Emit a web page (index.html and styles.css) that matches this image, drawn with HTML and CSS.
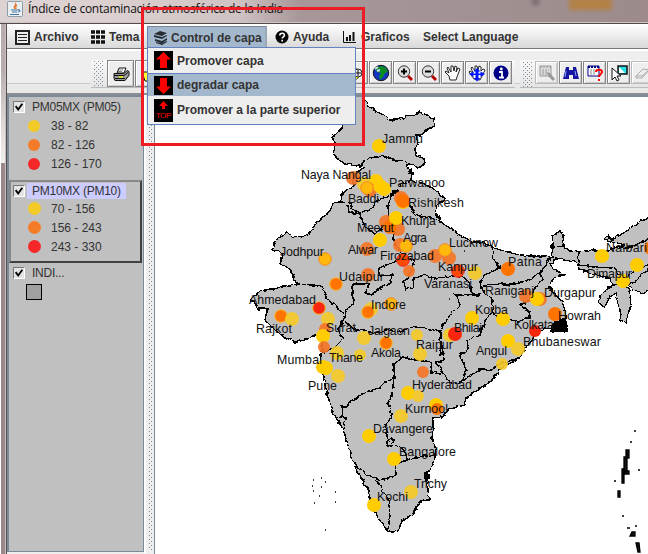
FILE: index.html
```
<!DOCTYPE html>
<html lang="es">
<head>
<meta charset="utf-8">
<title>Índice de contaminación atmosférica de la India</title>
<link rel="stylesheet" href="styles.css">
</head>
<body>
<div class="window">
  <header class="titlebar">
    <svg class="java" width="16" height="16" viewBox="0 0 16 16"><rect x=".5" y=".5" width="15" height="15" rx="1" fill="#e8eef2" stroke="#8b9eaa"/><path d="M8 2c3 2-3 3 0 6M10 4c-2 1-1 2-1 4" fill="none" stroke="#e8742c" stroke-width="1.2"/><path d="M4 9h7M5 11h5M3 13.5h9M11 9c3-1 2 2 0 2" fill="none" stroke="#47749a" stroke-width="1.1"/></svg>
    <span class="title">Índice de contaminación atmosférica de la India</span>
    <i class="blur-spot"></i><i class="blur-patch"></i>
  </header>
  <div class="frame">
    <nav class="menubar">
      <div class="menu archivo"><svg width="15" height="15" viewBox="0 0 15 15"><rect x="1" y="1" width="13" height="13" fill="#eee" stroke="#222" stroke-width="2"/><path d="M3 4.500h9M3 7.500h9M3 10.500h9" stroke="#222"/></svg><span>Archivo</span></div>
      <div class="menu tema"><svg width="14" height="14" viewBox="0 0 14 14"><path d="M0 2h4M5 2h4M10 2h4M0 7h4M5 7h4M10 7h4M0 12h4M5 12h4M10 12h4" stroke="#111" stroke-width="3.600"/></svg><span>Tema</span></div>
      <div class="menu capa"><svg width="16" height="14" viewBox="0 0 16 14"><path d="M1 3l6-3 7 2-5 3zM1 4l8 2 5-2v1l-5 3-8-2zM2 8l7 2 5-3v2l-5 3-7-2zM3 11l6 1 5-2v1l-5 3-6-2z" fill="#252c33"/></svg><span>Control de capa</span></div>
      <div class="menu ayuda"><svg width="14" height="14" viewBox="0 0 14 14"><circle cx="7" cy="7" r="6.500" fill="#050505"/><path d="M4.800 5.500c0-3 4.600-3 4.600-.3 0 1.700-2.200 1.500-2.200 3.200M7.200 9.800v1.700" stroke="#fff" stroke-width="1.600" fill="none"/></svg><span>Ayuda</span></div>
      <div class="menu graficos"><svg width="13" height="12" viewBox="0 0 13 12"><path d="M.5 0v11.500H13" stroke="#111" fill="none"/><path d="M4 10V6M7 10V4M10.500 10V1" stroke="#111" stroke-width="2"/></svg><span>Graficos</span></div>
      <div class="menu lang"><span>Select Language</span></div>
    </nav>
    <div class="toolbar">
      <div class="strip first">
        <i class="grip"></i>
        <b class="tool big"><svg width="18" height="18" viewBox="0 0 18 18"><path d="M5 8l2-5h7l-2 5z" fill="#fff" stroke="#111"/><path d="M7 5h4M6 6.500h4" stroke="#555" stroke-width=".7"/><path d="M2 8.500h10l3-3 2 1v4l-4 5H3l-1-2z" fill="#999" stroke="#111"/><path d="M2 10.500h10l4-3M3 13.500h10" stroke="#111" fill="none"/><path d="M7 12h4" stroke="#dce21f" stroke-width="2"/></svg></b>
        <b class="tool big"><svg width="20" height="18" viewBox="0 0 20 18"><path d="M3 7h9v9H6z" fill="#ff3" stroke="#111"/></svg></b>
      </div>
      <div class="strip second">
        <b class="tool"><svg width="18" height="18" viewBox="0 0 18 18"><path d="M4 3l5 2 5 4-5 6-5 1z" fill="#ff0" stroke="#555"/><circle cx="10" cy="9" r="4" fill="#eee" stroke="#222"/><path d="M7 9h6M10 6v6" stroke="#111"/></svg></b>
        <b class="tool"><svg width="18" height="18" viewBox="0 0 18 18"><circle cx="9" cy="9" r="7.700" fill="#1434c4" stroke="#111"/><path d="M5 3l5-1 4 2 2 4-3 1-2 4-3 3-1-4 2-3-4-1-2-3z" fill="#0a8c25"/><path d="M3 5l3-2M5 7l3-1" stroke="#cde" stroke-width="2"/></svg></b>
        <b class="tool"><svg width="18" height="18" viewBox="0 0 18 18"><path d="M12 12l4 4" stroke="#b80000" stroke-width="3"/><circle cx="8" cy="7.500" r="5.700" fill="#ddd" stroke="#333"/><path d="M5 7.500h6M8 4.500v6" stroke="#000" stroke-width="2"/></svg></b>
        <b class="tool"><svg width="18" height="18" viewBox="0 0 18 18"><path d="M12 12l4 4" stroke="#b80000" stroke-width="3"/><circle cx="8" cy="7.500" r="5.700" fill="#ddd" stroke="#333"/><path d="M5 7.500h6" stroke="#000" stroke-width="2"/></svg></b>
        <b class="tool"><svg width="18" height="18" viewBox="0 0 18 18"><path d="M6 16l-1-4-4-4 1-1 3 2-2-5 1-1 3 5V2h2l1 5 1-5 2 1-1 5 2-4 2 1-3 8-1 3z" fill="#fff" stroke="#111" stroke-width=".9"/></svg></b>
        <b class="tool"><svg width="18" height="18" viewBox="0 0 18 18"><path d="M6 15l-5-7 1-1 3 2-2-5 1-1 3 4V2h2l1 4 1-4 2 1v4l2-2 2 1-3 6-2 4z" fill="#fff" stroke="#111" stroke-width=".9"/><path d="M9 4l3.500 3.500h-2v2h2v-2L17 10l-4.500 3v-2h-2v3h2L9 17.500 5.500 14h2v-3h-2v2L1 10l4.500-2.500v2h2v-2h-2z" fill="#0014ff"/></svg></b>
        <b class="tool"><svg width="16" height="16" viewBox="0 0 16 16"><circle cx="8" cy="8" r="7.500" fill="#000087"/><path d="M6 7h3v5M6 12.500h5" stroke="#fff" stroke-width="1.800" fill="none"/><circle cx="8.300" cy="4" r="1.400" fill="#fff"/></svg></b>
      </div>
      <div class="strip third">
        <i class="grip"></i>
        <b class="tool off"><svg width="18" height="18" viewBox="0 0 18 18"><path d="M2 2h11v10H2z" fill="#ddd" stroke="#999"/><path d="M2 3h11M4 6h7M4 8h6M4 10h6" stroke="#999" stroke-dasharray="2 1"/><path d="M9 8l3 1 5 6-2 2-5-5z" fill="#999"/></svg></b>
        <b class="tool"><svg width="18" height="18" viewBox="0 0 18 18"><path d="M4 3h3v3h4V3h3l3 12h-6v-4H7v4H1z" fill="#1515a0"/><path d="M4 7L3 13M13 7l1 5" stroke="#87a6ff"/></svg></b>
        <b class="tool"><svg width="18" height="18" viewBox="0 0 18 18"><path d="M2 2h11v10H2z" fill="#fff" stroke="#00008b"/><path d="M2 3h11" stroke="#00008b" stroke-width="2" stroke-dasharray="2 1"/><path d="M4 6h7M4 8h6M4 10h6" stroke="#888" stroke-dasharray="2 1"/><path d="M10 8c0-3 6-3 6 0 0 2-3 2-3 5M13 15v2" fill="none" stroke="#f00" stroke-width="2"/></svg></b>
        <b class="tool"><svg width="18" height="18" viewBox="0 0 18 18"><path d="M8 2h9v8H8z" fill="#28dfe8" stroke="#111" stroke-width="1.500"/><path d="M9 3l6 6H9z" fill="#fff"/><path d="M2 4v12l3-3 2 4 2-1-2-4h4z" fill="#fff" stroke="#111"/></svg></b>
        <b class="tool off"><svg width="18" height="18" viewBox="0 0 18 18"><path d="M2 12l7-7 6 1-7 8H2z" fill="#eee" stroke="#aaa"/><path d="M2 12h6l7-6" fill="none" stroke="#aaa"/></svg></b>
      </div>
    </div>
    <main class="split">
      <aside class="legend">
        <section class="layer">
          <div class="head"><svg class="check" width="12" height="12" viewBox="0 0 12 12"><path d="M2 5l3 4 5-7" fill="none" stroke="#000" stroke-width="2.200"/></svg><span>PM05MX (PM05)</span></div>
          <div class="range"><i class="dot y"></i><span>38 - 82</span></div>
          <div class="range"><i class="dot o"></i><span>82 - 126</span></div>
          <div class="range"><i class="dot r"></i><span>126 - 170</span></div>
        </section>
        <section class="layer active">
          <div class="head"><svg class="check" width="12" height="12" viewBox="0 0 12 12"><path d="M2 5l3 4 5-7" fill="none" stroke="#000" stroke-width="2.200"/></svg><span>PM10MX (PM10)</span></div>
          <div class="range"><i class="dot y"></i><span>70 - 156</span></div>
          <div class="range"><i class="dot o"></i><span>156 - 243</span></div>
          <div class="range"><i class="dot r"></i><span>243 - 330</span></div>
        </section>
        <section class="layer base">
          <div class="head"><svg class="check" width="12" height="12" viewBox="0 0 12 12"><path d="M2 5l3 4 5-7" fill="none" stroke="#000" stroke-width="2.200"/></svg><span>INDI...</span></div>
          <i class="square"></i>
        </section>
      </aside>
      <div class="divider"><i></i></div>
      <div class="map">
        <svg width="493" height="457" viewBox="155 97 493 457">
          <defs><filter id="rough" filterUnits="userSpaceOnUse" x="155" y="90" width="520" height="470"><feTurbulence type="fractalNoise" baseFrequency=".18" numOctaves="2" seed="7"/><feDisplacementMap in="SourceGraphic" scale="4.500" xChannelSelector="R" yChannelSelector="G"/></filter></defs>
          <g class="land" filter="url(#rough)">
            <path class="fill" d="M352 92L362 97 366 101 370 107 376 112 383 114 389 120 397 120 403 118 408 116 415 115 419 112 427 115 434 118 433 127 425 131 422 135 416 135 418 145 415 149 416 156 424 158 425 163 419 168 410 164 407 165 412 173 411 180 420 182 432 188 446 199 436 205 437 214 440 221 450 228 460 235 473 242 482 242 492 247 508 253 515 254 530 256 545 256 553 258 552 245 553 235 560 232 564 234 563 246 570 251 578 252 595 250 602 253 616 247 625 245 604 239 607 236 612 239 625 232 633 226 641 221 660 208V288L648 290 643 294 632 290 627 283 629 292 631 304 628 315 626 323 621 320 618 305 616 293 610 296 605 307 600 304 599 297 607 289 614 286 610 278 595 274 580 270 578 265 575 262 565 260 556 259 550 263 554 270 565 275 555 277 552 281 550 288 556 295 563 303 566 315 567 329 558 330 545 328 535 334 532 341 525 349 518 360 503 366 490 382 480 388 466 398 464 405 447 410 443 417 433 418 433 428 432 438 436 450 434 463 427 472 427 480 429 500 420 501 414 513 406 519 402 521 398 531 393 532 387 530 378 518 371 502 367 487 357 471 352 460 345 435 340 424 332 411 327 393 323 375 320 365 322 345 321 333 305 339 295 343 285 337 272 328 265 320 267 309 258 309 254 301 250 300 259 291 278 288 295 285 297 284 291 270 281 264 283 253 272 250 276 240 287 232 292 237 308 235 317 222 330 211 333 203 340 202 341 195 354 185 353 175 365 167 345 164 334 156 335 142 332 137 342 128 343 124 330 110Z"/>
            <path d="M360 168L364 160 375 157 384 156 392 160 400 160 406 162 410 173M340 202L350 203 352 209 360 213 372 208 378 200 389 196 400 186 411 180M348 206L349 212 360 214 362 222 368 230 375 233 386 226 392 228 397 232M389 220L388 206 392 195 398 190 405 200 411 207 415 215 430 218 440 221M397 225L393 240 403 255 395 262 378 268 380 276 392 275 391 283 378 289 371 295 365 293 370 284 353 284 353 295 355 303 346 310 345 318 340 310 328 300 323 287 312 285 297 284M347 315L343 320 338 330 344 338 337 345 325 352 322 350M345 322L357 330 365 331 375 333 390 330 400 331 415 327 430 329 440 332M403 255L415 262 410 275 404 282 406 290 413 287 414 278 425 275 435 278 447 277 460 276 470 282 472 293 480 295M492 247L493 258 500 268 485 275 481 282 483 293M483 285L500 284 515 284 530 280 543 270 550 258M480 295L455 295 460 305 450 315 443 325 440 335 441 355M483 290L493 300 492 312 500 318 518 321 530 318M492 312L485 320 480 335 467 340 468 350 460 355 466 370 463 380 455 385M458 383L468 378 480 370 490 370 500 364 518 358M403 357L415 360 430 362 432 372 445 375 452 385M441 340L444 360 436 362 443 373 452 385M345 408L350 402 355 400 365 392 380 388 385 382 394 377 394 364 403 357M394 377L392 395 388 403 392 415 386 425 388 440 387 446 398 445 404 450 408 460 400 463 395 462 396 475 380 480 366 474 354 463M404 461L415 457 436 455M376 480L382 490 388 498 390 515 388 530M386 441L393 439 391 447 386 445ZM336 417L345 418 344 430M345 408L342 405 343 418M540 270L542 280 534 290 530 300 520 305 530 312 528 320M553 247L563 246M578 252L579 265 595 267 612 268 622 276 630 285 648 270M616 247L630 248 648 238M627 283L629 275 636 270 648 265M626 285L614 286M532 341L540 329"/>
            <path class="delta" d="M554 322l12-4 1 13-17 0zM425 474h4v4h-4z"/>
          </g>
          <g class="specks"><path d="M626 450h3v8h-2v13h-3v-14h2zM622 469h2v14h-2zM618 491h2v6h-2zM624 471h5v3h-4zM632 532h3v4h-5zM636 543h3l1 9h-2zM626 454h1v1M634 431h2M630 442h2M638 470h2M614 481h2M622 516h2M627 528h3M635 526h2M313 480h1M321 478h1M325 482h1M312 486h1M321 487h1M313 491h1M335 492h1M319 496h1M314 503h1M335 502h1M325 530h1M464 251h1M449 299h1"/></g>
          <g class="cities">
            <circle class="y" cx="379" cy="146"/><circle class="oo" cx="353" cy="178"/><circle class="y" cx="376" cy="181"/><circle class="yy" cx="364" cy="184"/><circle class="y" cx="384" cy="189"/><circle class="oo" cx="370" cy="190"/><circle class="y" cx="380" cy="186"/><circle class="y ring" cx="367" cy="188"/><circle class="y" cx="403" cy="202"/><circle class="oo" cx="401" cy="198"/><circle class="o" cx="403" cy="201"/>
            <circle class="oo" cx="386" cy="222"/><circle class="oo" cx="398" cy="229"/><circle class="o" cx="390" cy="227"/><circle class="y" cx="396" cy="218"/><circle class="y" cx="380" cy="240"/><circle class="oo" cx="367" cy="249"/><circle class="y ring" cx="325" cy="259"/><circle class="oo" cx="368" cy="275"/><circle class="o halo" cx="336" cy="284"/>
            <circle class="oo" cx="400" cy="245"/><circle class="y ring" cx="406" cy="246"/><circle class="o ringr" cx="403" cy="260"/><circle class="oo small" cx="409" cy="271"/><circle class="oo" cx="435" cy="256"/><circle class="oo" cx="449" cy="258"/><circle class="y ring" cx="445" cy="250"/><circle class="o ringr" cx="458" cy="271"/><circle class="yy" cx="475" cy="273"/><circle class="o" cx="508" cy="269"/>
            <circle class="o halo" cx="281" cy="316"/><circle class="yy" cx="292" cy="319"/><circle class="r halo" cx="319" cy="308"/><circle class="yy" cx="328" cy="319"/><circle class="oo small" cx="325" cy="329"/><circle class="y" cx="323" cy="336"/><circle class="oo small" cx="324" cy="347"/><circle class="yy" cx="337" cy="353"/><circle class="yy small" cx="360" cy="355"/><circle class="y" cx="323" cy="367"/><circle class="y" cx="326" cy="368"/><circle class="yy" cx="338" cy="376"/>
            <circle class="yy" cx="371" cy="309"/><circle class="o halo" cx="368" cy="312"/><circle class="y ring" cx="391" cy="304"/><circle class="yy" cx="364" cy="338"/><circle class="o halo" cx="386" cy="343"/><circle class="yy small" cx="417" cy="335"/><circle class="yy" cx="420" cy="354"/><circle class="oo small" cx="423" cy="372"/><circle class="y" cx="472" cy="318"/><circle class="yy" cx="450" cy="335"/><circle class="r" cx="455" cy="334"/><circle class="y" cx="503" cy="319"/><circle class="y" cx="508" cy="341"/><circle class="yy" cx="518" cy="349"/><circle class="yy small" cx="502" cy="364"/>
            <circle class="oo" cx="526" cy="296"/><circle class="oo" cx="540" cy="299"/><circle class="y" cx="537" cy="299"/><circle class="o" cx="555" cy="314"/><circle class="r small" cx="535" cy="331"/><circle class="y" cx="602" cy="256"/><circle class="y" cx="637" cy="265"/><circle class="y" cx="623" cy="281"/><circle class="o" cx="651" cy="248"/>
            <circle class="y" cx="408" cy="393"/><circle class="yy small" cx="418" cy="396"/><circle class="y" cx="436" cy="405"/><circle class="o small" cx="437" cy="409"/><circle class="yy" cx="401" cy="416"/><circle class="y" cx="369" cy="436"/><circle class="y" cx="394" cy="459"/><circle class="yy" cx="411" cy="492"/><circle class="y" cx="374" cy="505"/>
          </g>
          <g class="labels">
            <text x="382" y="143" textLength="41">Jammu</text><text x="301" y="179" textLength="70">Naya Nangal</text><text x="389" y="187" textLength="56">Parwanoo</text><text x="348" y="203" textLength="31">Baddi</text><text x="408" y="207" textLength="56">Rishikesh</text><text x="401" y="225" textLength="35">Khurja</text><text x="357" y="232" textLength="37">Meerut</text><text x="403" y="242" textLength="24">Agra</text><text x="348" y="254" textLength="30">Alwar</text><text x="280" y="256" textLength="44">Jodhpur</text><text x="449" y="247" textLength="49">Lucknow</text><text x="380" y="260" textLength="54">Firozabad</text><text x="438" y="271" textLength="40">Kanpur</text><text x="508" y="266" textLength="34">Patna</text><text x="339" y="281" textLength="45">Udaipur</text><text x="424" y="288" textLength="48">Varanasi</text><text x="249" y="304" textLength="67">Ahmedabad</text><text x="371" y="309" textLength="35">Indore</text><text x="256" y="333" textLength="36">Rajkot</text><text x="326" y="332" textLength="30">Surat</text><text x="368" y="335" textLength="42">Jalgaon</text><text x="277" y="364" textLength="45">Mumbai</text><text x="329" y="362" textLength="34">Thane</text><text x="371" y="357" textLength="30">Akola</text><text x="308" y="390" textLength="29">Pune</text><text x="416" y="349" textLength="37">Raipur</text><text x="454" y="332" textLength="28">Bhilai</text><text x="475" y="314" textLength="33">Korba</text><text x="476" y="355" textLength="31">Angul</text><text x="485" y="295" textLength="49">Raniganj</text><text x="544" y="297" textLength="52">Durgapur</text><text x="558" y="320" textLength="43">Howrah</text><text x="514" y="329" textLength="40">Kolkata</text><text x="523" y="346" textLength="78">Bhubaneswar</text><text x="606" y="252" textLength="41">Nalbari</text><text x="587" y="278" textLength="45">Dimapur</text><text x="412" y="389" textLength="60">Hyderabad</text><text x="405" y="413" textLength="43">Kurnool</text><text x="373" y="433" textLength="60">Davangere</text><text x="399" y="456" textLength="57">Bangalore</text><text x="414" y="488" textLength="33">Trichy</text><text x="377" y="501" textLength="31">Kochi</text>
          </g>
        </svg>
      </div>
    </main>
  </div>
  <div class="popup">
    <div class="entry"><svg width="19" height="19" viewBox="0 0 19 19"><path d="M0 0h19v19H0z"/><path d="M9.500 1L17 8.500h-4V17H6V8.500H2z" fill="#f00"/></svg><span class="e1">Promover capa</span></div>
    <div class="entry chosen"><svg width="19" height="19" viewBox="0 0 19 19"><path d="M0 0h19v19H0z"/><path d="M9.500 18L2 10.500h4V2h7v8.500h4z" fill="#f00"/></svg><span class="e2">degradar capa</span></div>
    <div class="entry last"><svg width="19" height="23" viewBox="0 0 19 23"><path d="M0 0h19v23H0z"/><path d="M9.500 2L14 7h-3v3H8V7H5z" fill="#f00"/><text x="2" y="19" textLength="15">TOP</text></svg><span class="e3">Promover a la parte superior</span></div>
  </div>
  <div class="marker"></div>
</div>
</body>
</html>
```
FILE: styles.css
```
* { box-sizing: border-box; }
body { margin: 0; font-family: "Liberation Sans", sans-serif; font-size: 12px; color: #333; overflow: hidden; }
svg { display: block; flex: none; }
.window { position: relative; width: 648px; height: 554px; padding-left: 7px; background: linear-gradient(90deg, #fff 0 1px, #9b898a 1px 5px, #c9c1c1 5px 6px, #574f50 6px 7px, #fff 7px); overflow: hidden; }
.window::before { content: ""; position: absolute; left: 1px; top: 24px; width: 4px; height: 139px; background: linear-gradient(#b7adad 0 45px, #ddd9d8 100px, #f1efee); }
.titlebar { position: relative; display: flex; gap: 5px; height: 24px; margin-left: -7px; padding: 1px 0 0 7px; background: linear-gradient(90deg, #ddd3d2 0, #dcd1d0 110px, #cfc2c2 240px, #a79798 300px, #9d8b8c); border-bottom: 1px solid #514b4b; box-shadow: inset 0 -1px #cfc5c5; color: #111; }
.title { font: 12px/16px "Open Sans", sans-serif; letter-spacing: -.25px; white-space: nowrap; }
.blur-spot, .blur-patch { position: absolute; filter: blur(2px); top: -3px; }
.blur-spot { left: 532px; width: 7px; height: 8px; background: #776a6e; }
.blur-patch { left: 569px; width: 43px; height: 13px; background: #b28145; }
.frame { height: 530px; background: #eee; }
.menubar { display: flex; height: 25px; padding-top: 2px; background: linear-gradient(#fff, #d9d9d9); border-bottom: 1px solid #777; font-weight: bold; }
.menu { display: flex; align-items: center; gap: 4px; height: 22px; white-space: nowrap; color: #333; }
.archivo { width: 84px; padding-left: 8px; }
.tema { width: 56px; padding-left: 0; }
.capa { width: 120px; padding-left: 5px; gap: 2px; background: #a3b8cc; border-right: 2px solid #9ba8b9; border-top: 1px solid #76889a; border-left: 1px solid #6382bf; }
.ayuda { width: 76px; padding-left: 8px; }
.graficos { width: 73px; padding-left: 0; gap: 5px; }
.lang { padding-left: 7px; }
.toolbar { display: flex; height: 46px; padding-top: 9px; border-top: 2px solid #fff; border-bottom: 2px solid #8b8f94; background: #eee; overflow: hidden; box-shadow: inset 0 -9px #e9e9e9, inset 0 -10px #c9c9c9; }
.strip { display: flex; flex: none; height: 28px; background: linear-gradient(#f9f9f9, #e5e5e5); border-bottom: 1px solid #bbb; }
.first { margin-left: 84px; width: 56px; padding-left: 2px; overflow: hidden; }
.second { margin-left: 190px; width: 178px; padding: 1px 0 0 8px; gap: 1px; }
.third { margin-left: 5px; padding-top: 1px; gap: 1px; width: 136px; }
.grip { width: 10px; flex: none; margin-right: 4px; background: radial-gradient(circle at 1.5px 1.5px, #7d8c9b .6px, transparent .7px) 0 0 / 4px 4px, radial-gradient(circle at 3.5px 3.5px, #7d8c9b .6px, transparent .7px) 0 0 / 4px 4px; }
.third .grip { margin: 0 2px 0 2px; }
.tool { flex: none; width: 23px; height: 23px; display: grid; place-items: center; border: 1px solid #858585; box-shadow: inset 1px 1px #fff, inset -1px -1px #ccc; background: #eee; }
.big { width: 27px; height: 27px; margin-right: 1px; }
.off { border-color: #bbb; }
.split { display: flex; height: 459px; }
.legend { width: 137px; height: 457px; border: 1px solid #7a8a99; border-left-width: 2px; border-top-width: 2px; background: #c0c0c0; }
.layer { height: 83px; padding: 1px 0 0 3px; }
.active { margin-right: 1px; padding: 0 0 0 1px; border: 2px solid #404040; border-top-color: #888; border-left-color: #888; }
.head { display: flex; height: 17px; align-items: center; }
.layer .head { height: 18px; }
.active .head { height: 17px; }
.head span { margin-left: 3px; padding: 0 5px 0 4px; line-height: 16px; letter-spacing: -.25px; }
.active .head span { background: #ccf; padding: 0 5px; margin-left: 2px; }
.check { width: 12px; height: 12px; background: #e4e4e4; border: 1px solid #fff; border-top-color: #777; border-left-color: #777; flex: none; margin-left: 1px; }
.range { display: flex; height: 19px; align-items: center; gap: 11px; padding-left: 16px; }
.dot { width: 12px; height: 12px; border-radius: 50%; }
.active .dot { width: 13px; height: 13px; }
.active .range { gap: 10px; }
.dot.y { background: #f3ca28; } .dot.o { background: #f47b28; } .dot.r { background: #f42828; }
.square { display: block; width: 16px; height: 16px; margin: 2px 0 0 14px; border: 1px solid #000; background: #a0a0a0; }
.base { padding-top: 1px; }
.divider { width: 10px; height: 458px; padding-left: 5px; background: linear-gradient(90deg, #fff 0 2px, #eee 2px); }
.divider i { display: block; height: 456px; width: 4px; background: radial-gradient(circle at .5px .5px, #7d8c9b .6px, transparent .7px) 0 0 / 4px 4px, radial-gradient(circle at 2.5px 2.5px, #7d8c9b .6px, transparent .7px) 0 0 / 4px 4px; }
.map { flex: 1; border: solid #7a8a99; border-width: 2px 0 0 1px; background: #fff; overflow: hidden; }
.land { fill: none; stroke: #000; stroke-width: 1.4; stroke-linejoin: round; shape-rendering: crispEdges; }
.land .fill { fill: #c0c0c0; }
.land .delta { fill: #000; }
.specks { fill: #111; stroke: #000; stroke-width: 1.3; }
.cities circle { r: 7px; }
.cities .small { r: 6px; }
.cities .y { fill: #fc0; } .cities .yy { fill: #f4ca28; fill-opacity: .92; }
.cities .o { fill: #ff7400; } .cities .oo { fill: #f47528; fill-opacity: .93; }
.cities .r { fill: #f9260e; }
.cities .ring { fill: #ffb90c; stroke: #f48924; r: 6.3px; }
.cities .halo { stroke: #f4bd28; r: 6.3px; }
.cities .ringr { fill: #ff4a00; stroke: #f42828; r: 6.3px; }
.labels { font-size: 12.4px; fill: #111; }
.popup { position: absolute; left: 147px; top: 47px; width: 209px; height: 78px; border: 1px solid #6382bf; background: #eee; font-weight: bold; }
.entry { display: flex; align-items: center; gap: 4px; height: 25px; padding-left: 6px; white-space: nowrap; color: #333; }
.chosen { height: 23px; background: #a3b8cc; border-top: 1px solid #6382bf; }
.last { height: 28px; }
.entry text { font: 8px "Liberation Sans", sans-serif; fill: #f00; }
.marker { position: absolute; left: 141px; top: 7px; width: 224px; height: 139px; border: 3px solid #ed1c24; }
```
